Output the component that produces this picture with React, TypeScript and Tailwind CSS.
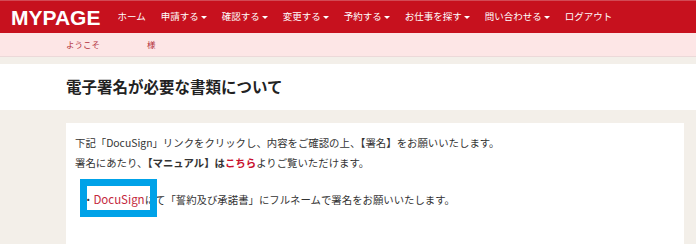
const jp = "font-['Noto_Sans_CJK_JP','Noto_Sans',sans-serif]";

const navItems: { label: string; caret: boolean }[] = [
  { label: "ホーム", caret: false },
  { label: "申請する", caret: true },
  { label: "確認する", caret: true },
  { label: "変更する", caret: true },
  { label: "予約する", caret: true },
  { label: "お仕事を探す", caret: true },
  { label: "問い合わせる", caret: true },
  { label: "ログアウト", caret: false },
];

function Caret() {
  return (
    <span className="ml-[2px] inline-block h-0 w-0 border-x-[3px] border-t-[3px] border-x-transparent border-t-white" />
  );
}

export default function App() {
  return (
    <div className={`h-[244px] w-[696px] overflow-hidden bg-[#f3efe9] ${jp}`}>
      {/* header */}
      <header className="flex h-[33px] items-center border-t border-[#d24a55] bg-[#c7111e]">
        <div className="pl-[11px] font-['Liberation_Sans',Arial,sans-serif] text-[21px] font-bold leading-none text-white">
          MYPAGE
        </div>
        <nav className="ml-[17px] flex items-center gap-[15px]">
          {navItems.map((n) => (
            <span key={n.label} className="flex items-center text-[9.5px] leading-none text-white">
              {n.label}
              {n.caret && <Caret />}
            </span>
          ))}
        </nav>
      </header>

      {/* welcome */}
      <div className="flex h-[24px] items-center border-b border-[#ecd9d9] bg-[#fde6e6] pl-[66px] text-[8.5px] text-[#b3303d]">
        <span>ようこそ</span>
        <span className="w-[47px]" />
        <span>様</span>
      </div>

      <div className="h-[7px]" />

      {/* title */}
      <div className="flex h-[46px] items-center bg-white pl-[66px]">
        <h1 className="text-[15.5px] font-bold text-[#222]">電子署名が必要な書類について</h1>
      </div>

      {/* card */}
      <div className="ml-[66px] mr-[12px] mt-[13px] h-[140px] bg-white pl-[9px] pt-[10px] text-[10.4px] leading-[20px] text-[#333]">
        <p>下記「DocuSign」リンクをクリックし、内容をご確認の上、【署名】をお願いいたします。</p>
        <p>
          署名にあたり、<b>【マニュアル】は</b>
          <b className="text-[#c8102e]">こちら</b>よりご覧いただけます。
        </p>
        <div className="relative mt-[16px] pl-[8px]">
          <span>・</span>
          <span className="text-[11.5px] text-[#c4283c]">DocuSign</span>
          にて「誓約及び承諾書」にフルネームで署名をお願いいたします。
          <div className="absolute left-[5px] top-[-10px] h-[38px] w-[77px] border-[7px] border-[#00a2e8]" />
        </div>
      </div>
    </div>
  );
}
